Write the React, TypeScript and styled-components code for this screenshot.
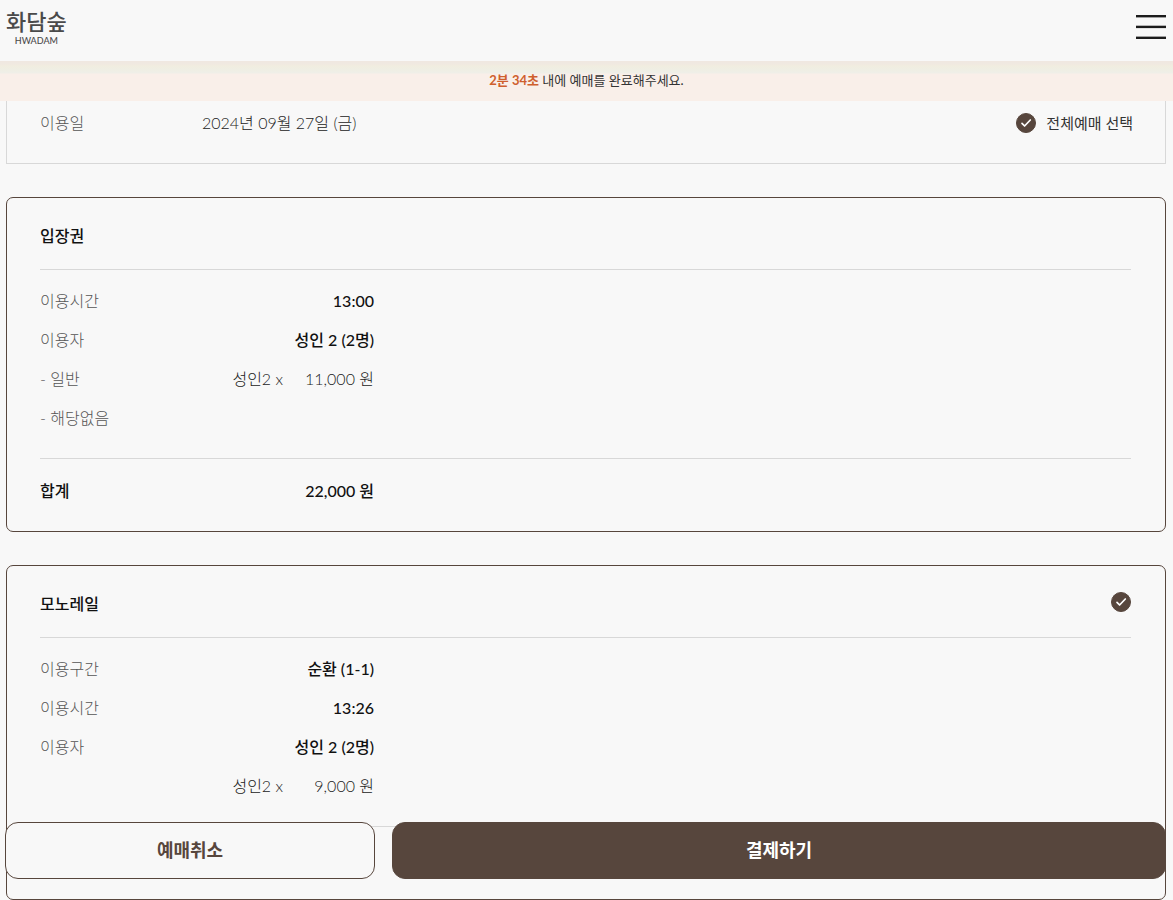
import React from 'react';
import styled, { createGlobalStyle } from 'styled-components';

const brown = '#57463d';
const paper = '#f8f8f8';
const line = '#d8d8d8';

const GlobalStyle = createGlobalStyle`
  *, *::before, *::after { box-sizing: border-box; }
  body {
    margin: 0;
    background: ${paper};
    color: #222;
    font-family: Lato, "Noto Sans CJK KR", sans-serif;
    font-size: 16px;
    font-weight: 300;
    line-height: 24px;
  }
  button { font-family: inherit; cursor: pointer; }
  h1, h2, p, dl, dd, dt { margin: 0; font-size: inherit; }
`;

const Header = styled.header`
  display: flex;
  justify-content: space-between;
  align-items: flex-start;
  height: 61px;
  padding: 9px 7px 0 6px;
`;

const Logo = styled.a`
  display: flex;
  flex-direction: column;
  align-items: center;
  color: #4a4a4a;
  text-decoration: none;
`;

const LogoName = styled.span`
  font-size: 22px;
  font-weight: 500;
  line-height: 26px;
`;

const LogoLatin = styled.span`
  font-size: 9px;
  font-weight: 500;
  line-height: 11px;
`;

const MenuButton = styled.button`
  display: block;
  margin-top: 6px;
  padding: 0;
  border: 0;
  background: none;
  svg { display: block; }
`;

const Notice = styled.p`
  height: 40px;
  line-height: 38px;
  text-align: center;
  font-size: 13px;
  font-weight: 400;
  color: #333;
  background: linear-gradient(
    #f0e8e1 0, #f0e9e1 3px, #f1ede0 5px, #efeee3 8px, #efefe8 12px, #f9efe9 13px
  );
`;

const TimeLeft = styled.strong`
  font-weight: 700;
  color: #cf5f2e;
`;

const Main = styled.main`
  display: flex;
  flex-direction: column;
  gap: 33px;
  padding: 0 7px 0 6px;
`;

const DatePanel = styled.section`
  display: flex;
  justify-content: space-between;
  padding: 10px 32px 28px 33px;
  border: 1px solid ${line};
  border-top: 0;
`;

const DateInfo = styled.dl`
  display: grid;
  grid-template-columns: 162px auto;
`;

const Label = styled.dt`
  color: #555;
`;

const Value = styled.dd<{ $strong?: boolean }>`
  color: ${(p) => (p.$strong ? '#111' : '#222')};
  font-weight: ${(p) => (p.$strong ? 500 : 300)};
`;

const CheckLabel = styled.label`
  display: flex;
  align-items: center;
  gap: 10px;
  font-size: 15px;
  font-weight: 400;
  color: #333;
`;

const CheckBox = styled.span`
  display: grid;
  width: 20px;
  height: 20px;
  input, svg { grid-area: 1 / 1; width: 20px; height: 20px; margin: 0; }
  input {
    appearance: none;
    border: 1px solid ${brown};
    border-radius: 50%;
  }
  input:checked { background: ${brown}; }
  svg { z-index: 1; visibility: hidden; pointer-events: none; }
  input:checked + svg { visibility: visible; }
`;

const Card = styled.section`
  padding: 0 34px 0 33px;
  border: 1px solid ${brown};
  border-radius: 7px;
`;

const CardHead = styled.div`
  display: flex;
  justify-content: space-between;
  align-items: flex-start;
  padding: 26px 0 21px;
  border-bottom: 1px solid ${line};
`;

const CardTitle = styled.h2`
  font-weight: 500;
  color: #111;
`;

const Rows = styled.dl`
  display: flex;
  flex-direction: column;
  gap: 15px;
  padding: 19px 0 28px;
  border-bottom: 1px solid ${line};
`;

const Row = styled.div`
  display: flex;
  justify-content: space-between;
  max-width: 334px;
  min-height: 24px;
`;

const PriceValue = styled(Value)`
  display: flex;
  margin-left: auto;
`;

const Price = styled.span`
  min-width: 91px;
  text-align: right;
`;

const Total = styled.div`
  display: flex;
  justify-content: space-between;
  max-width: 334px;
  min-height: 72px;
  padding-top: 20px;
  font-weight: 500;
  color: #111;
`;

const Actions = styled.div`
  position: fixed;
  left: 0;
  right: 0;
  bottom: 21px;
  display: grid;
  grid-template-columns: 370fr 774fr;
  gap: 17px;
  padding: 0 7px 0 5px;
`;

const ActionButton = styled.button<{ $primary?: boolean }>`
  height: 57px;
  padding: 0 0 4px;
  border: 1px solid ${brown};
  border-radius: 13px;
  background: ${(p) => (p.$primary ? brown : paper)};
  color: ${(p) => (p.$primary ? '#fff' : brown)};
  font-size: 18px;
  font-weight: 700;
`;

function Check({ name }: { name?: string }) {
  return (
    <CheckBox>
      <input type="checkbox" defaultChecked aria-label={name} />
      <svg viewBox="0 0 20 20" fill="none" stroke="#fff" strokeWidth="1.7" strokeLinecap="round" strokeLinejoin="round">
        <path d="M6 10.3 8.6 13 14.3 7" />
      </svg>
    </CheckBox>
  );
}

interface RowData {
  label?: string;
  value?: string;
  count?: string;
  price?: string;
}

interface TicketProps {
  title: string;
  selectable?: boolean;
  rows: RowData[];
  total?: string;
}

function Ticket({ title, selectable, rows, total }: TicketProps) {
  return (
    <Card>
      <CardHead>
        <CardTitle>{title}</CardTitle>
        {selectable && <Check name={title} />}
      </CardHead>
      <Rows>
        {rows.map((row, i) => (
          <Row key={i}>
            {row.label && <Label>{row.label}</Label>}
            {row.value && <Value $strong>{row.value}</Value>}
            {row.price && (
              <PriceValue>
                <span>{row.count}</span>
                <Price>{row.price}</Price>
              </PriceValue>
            )}
          </Row>
        ))}
      </Rows>
      <Total>
        {total && (
          <>
            <span>합계</span>
            <span>{total}</span>
          </>
        )}
      </Total>
    </Card>
  );
}

const admission: RowData[] = [
  { label: '이용시간', value: '13:00' },
  { label: '이용자', value: '성인 2 (2명)' },
  { label: '- 일반', count: '성인2 x', price: '11,000 원' },
  { label: '- 해당없음' },
];

const monorail: RowData[] = [
  { label: '이용구간', value: '순환 (1-1)' },
  { label: '이용시간', value: '13:26' },
  { label: '이용자', value: '성인 2 (2명)' },
  { count: '성인2 x', price: '9,000 원' },
];

export default function App() {
  return (
    <>
      <GlobalStyle />
      <Header>
        <Logo href="#">
          <LogoName>화담숲</LogoName>
          <LogoLatin>HWADAM</LogoLatin>
        </Logo>
        <MenuButton type="button" aria-label="메뉴">
          <svg width="30" height="24" viewBox="0 0 30 24" fill="#1c1c1c">
            <rect y="0" width="30" height="2.4" />
            <rect y="10.7" width="30" height="2.4" />
            <rect y="21.6" width="30" height="2.4" />
          </svg>
        </MenuButton>
      </Header>
      <Notice>
        <TimeLeft>2분 34초</TimeLeft> 내에 예매를 완료해주세요.
      </Notice>
      <Main>
        <DatePanel>
          <DateInfo>
            <Label>이용일</Label>
            <Value>2024년 09월 27일 (금)</Value>
          </DateInfo>
          <CheckLabel>
            <Check />
            전체예매 선택
          </CheckLabel>
        </DatePanel>
        <Ticket title="입장권" rows={admission} total="22,000 원" />
        <Ticket title="모노레일" selectable rows={monorail} />
      </Main>
      <Actions>
        <ActionButton type="button">예매취소</ActionButton>
        <ActionButton type="button" $primary>결제하기</ActionButton>
      </Actions>
    </>
  );
}
